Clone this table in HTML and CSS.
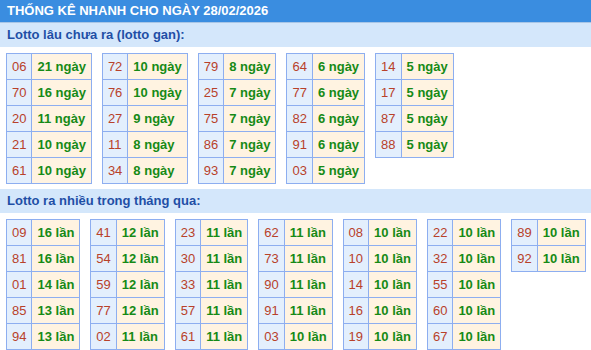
FILE: index.html
```html
<!DOCTYPE html>
<html lang="vi">
<head>
<meta charset="utf-8">
<title>Thống kê nhanh</title>
<link rel="stylesheet" href="styles.css">
</head>
<body>
<div class="header">THỐNG KÊ NHANH CHO NGÀY 28/02/2026</div>
<div class="title">Lotto lâu chưa ra (lotto gan):</div>
<div class="tables">
  <table><tr><td class="n">06</td><td class="v">21 ngày</td></tr><tr><td class="n">70</td><td class="v">16 ngày</td></tr><tr><td class="n">20</td><td class="v">11 ngày</td></tr><tr><td class="n">21</td><td class="v">10 ngày</td></tr><tr><td class="n">61</td><td class="v">10 ngày</td></tr></table>
  <table><tr><td class="n">72</td><td class="v">10 ngày</td></tr><tr><td class="n">76</td><td class="v">10 ngày</td></tr><tr><td class="n">27</td><td class="v">9 ngày</td></tr><tr><td class="n">11</td><td class="v">8 ngày</td></tr><tr><td class="n">34</td><td class="v">8 ngày</td></tr></table>
  <table><tr><td class="n">79</td><td class="v">8 ngày</td></tr><tr><td class="n">25</td><td class="v">7 ngày</td></tr><tr><td class="n">75</td><td class="v">7 ngày</td></tr><tr><td class="n">86</td><td class="v">7 ngày</td></tr><tr><td class="n">93</td><td class="v">7 ngày</td></tr></table>
  <table><tr><td class="n">64</td><td class="v">6 ngày</td></tr><tr><td class="n">77</td><td class="v">6 ngày</td></tr><tr><td class="n">82</td><td class="v">6 ngày</td></tr><tr><td class="n">91</td><td class="v">6 ngày</td></tr><tr><td class="n">03</td><td class="v">5 ngày</td></tr></table>
  <table><tr><td class="n">14</td><td class="v">5 ngày</td></tr><tr><td class="n">17</td><td class="v">5 ngày</td></tr><tr><td class="n">87</td><td class="v">5 ngày</td></tr><tr><td class="n">88</td><td class="v">5 ngày</td></tr></table>
</div>
<div class="title">Lotto ra nhiều trong tháng qua:</div>
<div class="tables">
  <table><tr><td class="n">09</td><td class="v">16 lần</td></tr><tr><td class="n">81</td><td class="v">16 lần</td></tr><tr><td class="n">01</td><td class="v">14 lần</td></tr><tr><td class="n">85</td><td class="v">13 lần</td></tr><tr><td class="n">94</td><td class="v">13 lần</td></tr></table>
  <table><tr><td class="n">41</td><td class="v">12 lần</td></tr><tr><td class="n">54</td><td class="v">12 lần</td></tr><tr><td class="n">59</td><td class="v">12 lần</td></tr><tr><td class="n">77</td><td class="v">12 lần</td></tr><tr><td class="n">02</td><td class="v">11 lần</td></tr></table>
  <table><tr><td class="n">23</td><td class="v">11 lần</td></tr><tr><td class="n">30</td><td class="v">11 lần</td></tr><tr><td class="n">33</td><td class="v">11 lần</td></tr><tr><td class="n">57</td><td class="v">11 lần</td></tr><tr><td class="n">61</td><td class="v">11 lần</td></tr></table>
  <table><tr><td class="n">62</td><td class="v">11 lần</td></tr><tr><td class="n">73</td><td class="v">11 lần</td></tr><tr><td class="n">90</td><td class="v">11 lần</td></tr><tr><td class="n">91</td><td class="v">11 lần</td></tr><tr><td class="n">03</td><td class="v">10 lần</td></tr></table>
  <table><tr><td class="n">08</td><td class="v">10 lần</td></tr><tr><td class="n">10</td><td class="v">10 lần</td></tr><tr><td class="n">14</td><td class="v">10 lần</td></tr><tr><td class="n">16</td><td class="v">10 lần</td></tr><tr><td class="n">19</td><td class="v">10 lần</td></tr></table>
  <table><tr><td class="n">22</td><td class="v">10 lần</td></tr><tr><td class="n">32</td><td class="v">10 lần</td></tr><tr><td class="n">55</td><td class="v">10 lần</td></tr><tr><td class="n">60</td><td class="v">10 lần</td></tr><tr><td class="n">67</td><td class="v">10 lần</td></tr></table>
  <table><tr><td class="n">89</td><td class="v">10 lần</td></tr><tr><td class="n">92</td><td class="v">10 lần</td></tr></table>
</div>
</body>
</html>
```
FILE: styles.css
```css
html, body {
  margin: 0;
  padding: 0;
  background: #ffffff;
  font-family: "Liberation Sans", Arial, sans-serif;
}
.header {
  height: 22px;
  line-height: 22px;
  padding-left: 7px;
  background: #3a8de0;
  color: #ffffff;
  font-size: 13px;
  font-weight: bold;
  border-bottom: 1px solid #a9c6e6;
}
.title {
  height: 24px;
  line-height: 24px;
  padding-left: 7px;
  background: #d4e7fb;
  color: #1f4fa6;
  font-size: 13px;
  font-weight: bold;
}
.tables {
  display: flex;
  align-items: flex-start;
  gap: 10px;
  padding: 6px 6px 5px 6px;
}
table {
  border-collapse: collapse;
  font-size: 13px;
}
td {
  border: 1px solid #8daef0;
  padding: 0 5px;
  line-height: 25px;
  white-space: nowrap;
}
td.n {
  background: #e3effd;
  color: #b8412a;
}
td.v {
  background: #fff3e1;
  color: #168a16;
  font-weight: bold;
}
```
